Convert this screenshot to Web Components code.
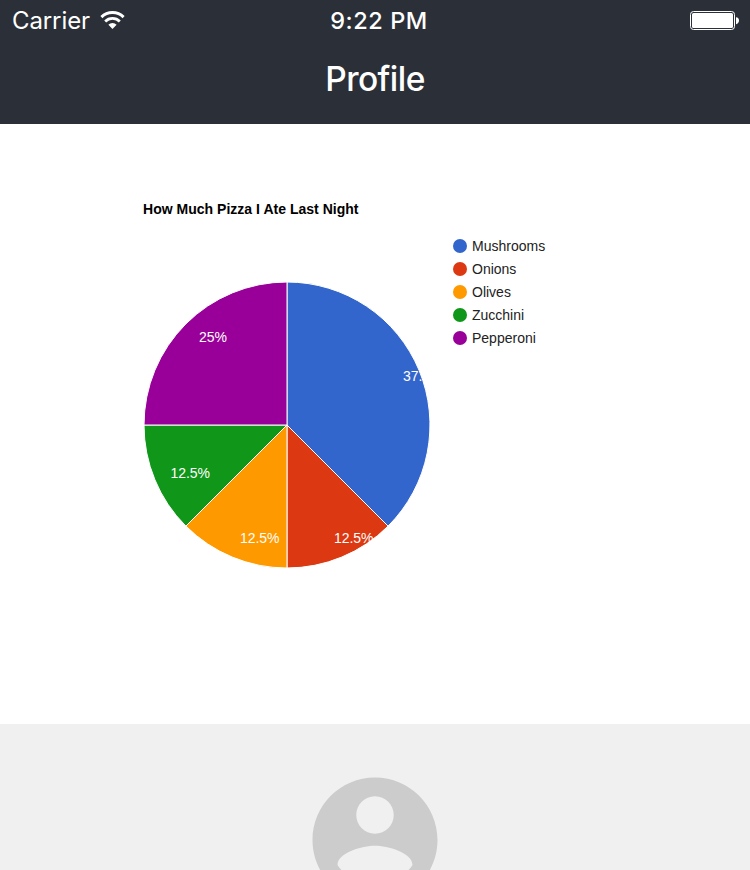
<!DOCTYPE html>
<html lang="en">
<head>
<meta charset="utf-8">
<title>Profile</title>
<style>
html,body{margin:0;height:100%;overflow:hidden;background:#fff}
</style>
</head>
<body>
<profile-screen></profile-screen>
<script>
const define = (name, html) => customElements.define(name, class extends HTMLElement {
  constructor() {
    super();
    this.attachShadow({mode: 'open'}).innerHTML = html;
  }
});

define('wifi-icon', `
<style>:host{display:block;width:26px;height:20px}svg{display:block}</style>
<svg width="26" height="20" viewBox="0 0 26 20" fill="none" stroke="#fff">
<path d="M1.4 7.1A15.8 15.8 0 0 1 23.6 7.1" stroke-width="2.9"/>
<path d="M5.2 11.5A10.2 10.2 0 0 1 19.8 11.5" stroke-width="2.7"/>
<path d="M8.4 14.8A5.8 5.8 0 0 1 16.6 14.8L12.5 18.9Z" fill="#fff" stroke="none"/>
</svg>`);

define('battery-icon', `
<style>:host{display:block;width:50px;height:20px}svg{display:block}</style>
<svg width="50" height="20" viewBox="0 0 50 20">
<rect x=".5" y=".5" width="44" height="18" rx="3" fill="none" stroke="#fff"/>
<rect x="2" y="2" width="41" height="15" rx="1.5" fill="#fff"/>
<path d="M46 6.2Q49 6.6 49 9.5T46 13.2Z" fill="#fff"/>
</svg>`);

define('status-bar', `
<style>
:host{display:grid;grid-template-columns:1fr auto 1fr;height:40px;box-sizing:border-box;padding:0 10px 0 12px;font-size:24px;line-height:41px}
.left{display:flex;gap:10px;letter-spacing:-.1px}
.left wifi-icon{margin-top:10px}
.time{font-weight:500;font-size:23.5px;letter-spacing:.55px;margin-left:6px}
.right{display:flex;justify-content:flex-end;padding-top:11px}
</style>
<div class="left"><span>Carrier</span><wifi-icon></wifi-icon></div>
<div class="time">9:22 PM</div>
<div class="right"><battery-icon></battery-icon></div>`);

define('nav-header', `
<style>
:host{display:block;height:124px;background:#2b2f37;color:#fff;font-family:Inter,"Liberation Sans",sans-serif}
.title{text-align:center;font-size:33.5px;line-height:78px;font-weight:450;letter-spacing:-.55px}
</style>
<status-bar></status-bar>
<div class="title"><slot></slot></div>`);

customElements.define('legend-item', class extends HTMLElement {
  constructor() {
    super();
    this.attachShadow({mode: 'open'}).innerHTML = `
<style>
:host{display:flex;align-items:center;gap:5px;height:23px;font-size:14px;line-height:17px;color:#222}
i{width:14px;height:14px;border-radius:50%;background:${this.getAttribute('color')}}
span{padding-top:2px}
</style><i></i><span><slot></slot></span>`;
  }
});

define('pie-plot', `
<style>:host{display:block;width:290px;height:290px}svg{display:block;overflow:visible}text{font-size:14px;fill:#fff}</style>
<svg width="290" height="290" viewBox="142 280 290 290">
<g stroke="#fff" stroke-width="1">
<path fill="#36c" d="M287 425V282A143 143 0 0 1 388.1 526.1Z"/>
<path fill="#dc3912" d="M287 425L388.1 526.1A143 143 0 0 1 287 568Z"/>
<path fill="#f90" d="M287 425V568A143 143 0 0 1 185.9 526.1Z"/>
<path fill="#109618" d="M287 425L185.9 526.1A143 143 0 0 1 144 425Z"/>
<path fill="#909" d="M287 425H144A143 143 0 0 1 287 282Z"/>
</g>
<text x="403" y="381" textLength="39.5">37.5%</text>
<text x="334" y="543" textLength="39.5">12.5%</text>
<text x="240" y="543" textLength="39.5">12.5%</text>
<text x="170.5" y="478" textLength="39.5">12.5%</text>
<text x="199" y="342" textLength="28">25%</text>
</svg>`);

define('pie-chart', `
<style>
:host{display:block;height:600px;box-sizing:border-box;padding:76px 0 0 142px;font-family:"Liberation Sans",Arial,sans-serif;background:#fff}
h2{margin:0 0 0 1px;font-size:14px;line-height:18px;color:#000;letter-spacing:.02px}
.body{display:flex;gap:21px;margin-top:16px}
pie-plot{margin-top:46px}
</style>
<h2><slot></slot></h2>
<div class="body"><pie-plot></pie-plot>
<div><legend-item color="#36c">Mushrooms</legend-item><legend-item color="#dc3912">Onions</legend-item><legend-item color="#f90">Olives</legend-item><legend-item color="#109618">Zucchini</legend-item><legend-item color="#909">Pepperoni</legend-item></div>
</div>`);

define('user-avatar', `
<style>:host{display:flex;justify-content:center;height:146px;box-sizing:border-box;padding-top:41px;background:#f0f0f0;overflow:hidden}svg{flex:none}</style>
<svg width="150" height="150" viewBox="0 0 24 24" fill="#ccc"><path d="M12 2C6.48 2 2 6.48 2 12s4.48 10 10 10 10-4.48 10-10S17.52 2 12 2zm0 3c1.66 0 3 1.34 3 3s-1.34 3-3 3-3-1.34-3-3 1.34-3 3-3zm0 14.2c-2.5 0-4.71-1.28-6-3.22.03-1.99 4-3.08 6-3.08 1.99 0 5.97 1.09 6 3.08-1.29 1.94-3.5 3.22-6 3.22z"/></svg>`);

define('profile-screen', `
<style>:host{display:block;width:750px;height:870px;overflow:hidden}</style>
<nav-header>Profile</nav-header>
<pie-chart>How Much Pizza I Ate Last Night</pie-chart>
<user-avatar></user-avatar>`);
</script>
</body>
</html>
